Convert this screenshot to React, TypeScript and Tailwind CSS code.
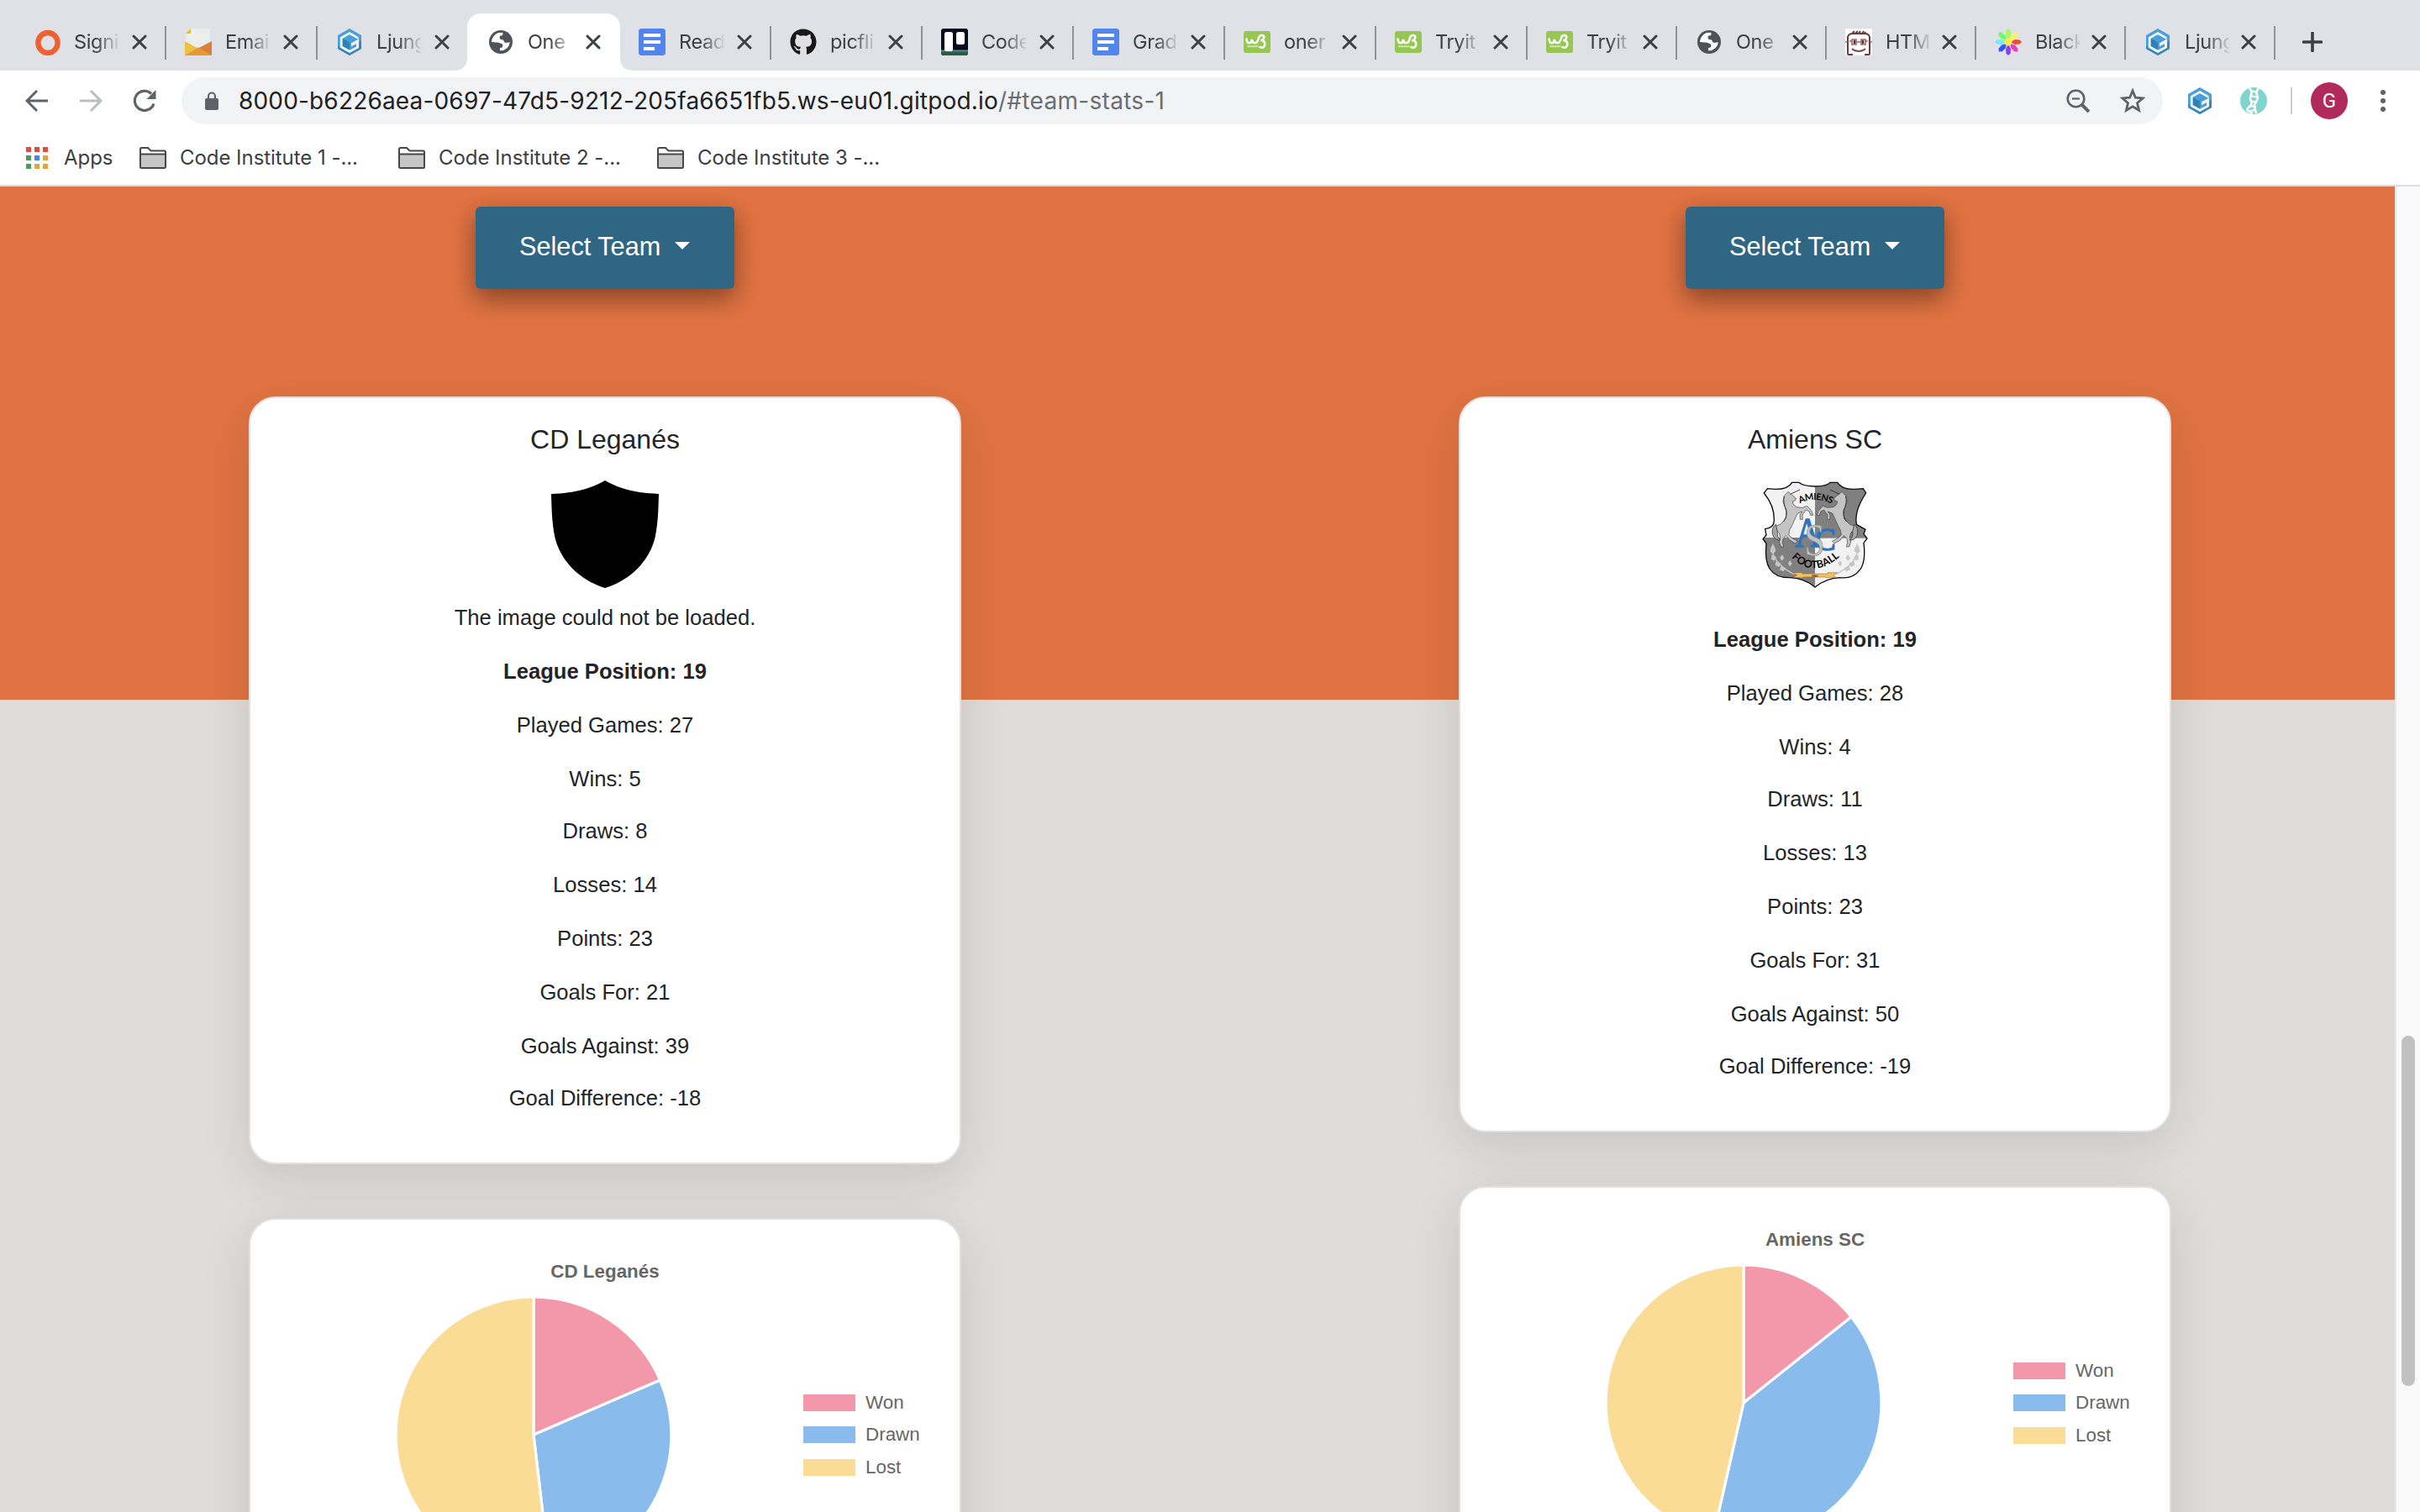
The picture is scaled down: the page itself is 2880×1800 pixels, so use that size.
import type { ReactNode } from "react";
import { FaGithub } from "react-icons/fa";

/* ---------- Favicons ---------- */

function RingIcon() {
  return (
    <svg viewBox="0 0 32 32" className="size-8">
      <ellipse cx="17" cy="17" rx="11.6" ry="12" fill="none" stroke="#ee6130" strokeWidth="6.4" />
    </svg>
  );
}

function MailIcon() {
  return (
    <svg viewBox="0 0 32 32" className="size-8">
      <path d="M7 0H30V22H1V6Z" fill="#eceeee" />
      <path d="M7 0V6H1Z" fill="#f2b91f" />
      <path d="M0 15L16 24L0 32Z" fill="#eac23e" />
      <path d="M32 15L15 24L32 32Z" fill="#d9803a" />
      <path d="M0 32L16 22.500L32 32Z" fill="#e69a35" />
    </svg>
  );
}

function GitpodIcon() {
  return (
    <svg viewBox="0 0 32 32" className="size-8">
      <path d="M16 0L30 8V24L16 32L2 24V8Z" fill="#4b9fd8" />
      <path d="M2 20V24L16 32L30 24V14L16 28Z" fill="#3587bb" />
      <path d="M16 4L26.500 10V13L16 7.200L7.500 12V21L16 25.800L24 21.500V18L18 21.300V17.200L27 12.500V23L16 29L4.800 22.700V10.300Z" fill="#f2f5f8" />
      <path d="M16 7.600L24 12L16 16.500L8 12Z" fill="#45a0dc" />
      <path d="M8 12L16 16.500V25L8 20.700Z" fill="#3180b2" />
    </svg>
  );
}

function GlobeIcon() {
  return (
    <svg viewBox="0 0 32 32" className="size-8">
      <circle cx="16" cy="16" r="14" fill="#50525a" />
      <path
        d="M18.300 4.700Q19 7.500 17.500 8.300L15 8.700Q14 11 15.300 12.700L19 13.500Q20 16.500 21.500 17L26.800 16.200Q26.500 20.500 23.500 23.300Q20 26.500 15 26.300V23Q18.500 23 18.300 20.500Q18.500 18.300 16.800 18L13.500 16.800L5.200 16Q5 12.500 7 9.800Q9.500 6 13 5Z"
        fill="#fff"
      />
      <path d="M5.200 14.800Q8.500 15.500 10.500 13.500T12.500 11.500L12.500 9.500" fill="none" stroke="#fff" strokeWidth="1.500" />
    </svg>
  );
}

function DocsIcon() {
  return (
    <svg viewBox="0 0 32 32" className="size-8">
      <rect width="32" height="32" rx="3.500" fill="#5186ec" />
      <path d="M6 6H26V10H6ZM6 14H26V18H6ZM6 22H19V26H6Z" fill="#fff" />
    </svg>
  );
}

function TrelloIcon() {
  return (
    <svg viewBox="0 0 32 32" className="size-8">
      <rect width="32" height="32" rx="3" fill="#020b1b" />
      <path d="M0 25H32V29Q32 32 29 32H3Q0 32 0 29Z" fill="#2c5a48" />
      <path d="M0 26H32V27.500H0Z" fill="#4c8a80" />
      <rect x="4" y="4" width="10" height="23" rx="2.500" fill="#fff" />
      <rect x="18" y="4" width="10" height="15" rx="2.500" fill="#fff" />
    </svg>
  );
}

function W3Icon() {
  return (
    <svg viewBox="0 0 32 32" className="size-8">
      <rect y="3" width="32" height="26" rx="3" fill="#96c654" />
      <path d="M3.500 12.500Q4 17.300 7 17.300Q9.500 17.300 10 13Q10.500 17.300 13.500 17.300Q16.500 17.300 18 11Q19 7.500 22.500 8Q25.500 9 23.500 12.500Q22.500 14 20.500 14.300Q26.500 14.500 25 20Q23.500 24 19.500 22" fill="none" stroke="#fff" strokeWidth="2.600" strokeLinecap="round" />
      <path d="M4.500 21.200H17.500" stroke="#e3f1cf" strokeWidth="2" strokeDasharray="1.500 .5" />
    </svg>
  );
}

function FaceIcon() {
  return (
    <svg viewBox="0 0 32 32" className="size-8">
      <rect width="32" height="32" fill="#fff" />
      <path d="M9 31H4Q2.500 31 3 28V10Q4 6 9 6H23Q28 6 29 10V28Q29.500 31 28 31H23M8 6L11 3M12 6L15 3M16 6L18 3M20 6L22 3M23 6L24 4" fill="none" stroke="#6a3b38" strokeWidth="2" />
      <path d="M8 13H13V19H8ZM19 13H24V19H19ZM13 16H19M0 16H3M5 15H8M24 15H27M29 16H32" fill="#e2cdcc" stroke="#9b6a67" strokeWidth="1.600" />
      <path d="M11 14V18M21 14V18" stroke="#5b2c2a" strokeWidth="2" />
      <path d="M8 24Q11 27 16 27T24 24" fill="none" stroke="#7d4f4c" strokeWidth="1.800" />
    </svg>
  );
}

const petals = [
  { angle: 0, color: "#a4fb57" },
  { angle: 45, color: "#fff262" },
  { angle: 90, color: "#f04b32" },
  { angle: 135, color: "#ec3fc0" },
  { angle: 180, color: "#8b3df2" },
  { angle: 225, color: "#2f55f2" },
  { angle: 270, color: "#70ecfd" },
  { angle: 315, color: "#72fa66" },
];

function FlowerIcon() {
  return (
    <svg viewBox="0 0 32 32" className="size-8">
      {petals.map((p) => (
        <path key={p.angle} d="M16 0L18.600 2.500L19 8L16.600 12.500H15.400L13 8L13.400 2.500Z" fill={p.color} transform={`rotate(${p.angle} 16 16)`} />
      ))}
      <circle cx="16" cy="16" r="4.500" fill="#fdea48" />
    </svg>
  );
}

function CloseIcon() {
  return (
    <svg viewBox="0 0 18 18" className="size-[18px]">
      <path d="M2 2L16 16M16 2L2 16" stroke="#3c4043" strokeWidth="3" strokeLinecap="round" />
    </svg>
  );
}

/* ---------- Browser chrome ---------- */

type Tab = { label: string; icon: ReactNode; active?: boolean; line?: boolean; narrow?: boolean };

const tabs: Tab[] = [
  { label: "Signi", icon: <RingIcon />, line: true },
  { label: "Emai", icon: <MailIcon />, line: true },
  { label: "Ljung", icon: <GitpodIcon /> },
  { label: "One", icon: <GlobeIcon />, active: true },
  { label: "Read", icon: <DocsIcon />, line: true },
  { label: "picfli", icon: <FaGithub className="size-8 text-[#191717]" />, line: true },
  { label: "Code", icon: <TrelloIcon />, line: true },
  { label: "Grad", icon: <DocsIcon />, line: true },
  { label: "oner", icon: <W3Icon />, line: true },
  { label: "Tryit", icon: <W3Icon />, line: true },
  { label: "Tryit", icon: <W3Icon />, line: true, narrow: true },
  { label: "One", icon: <GlobeIcon />, line: true, narrow: true },
  { label: "HTM", icon: <FaceIcon />, line: true, narrow: true },
  { label: "Black", icon: <FlowerIcon />, line: true, narrow: true },
  { label: "Ljung", icon: <GitpodIcon />, line: true, narrow: true },
];

function TabItem({ tab }: { tab: Tab }) {
  const width = tab.active ? "-ml-0.5 w-[182px] pl-6" : tab.narrow ? "w-[178px] pl-[22px]" : "w-[180px] pl-[22px]";
  return (
    <div className={`relative flex h-[68px] shrink-0 items-center ${width} ${tab.active ? "rounded-t-[16px] bg-white" : ""}`}>
      {tab.active && (
        <>
          <svg viewBox="0 0 16 16" className="absolute bottom-0 -left-4 size-4">
            <path d="M16 0V16H0Q16 16 16 0Z" fill="#fff" />
          </svg>
          <svg viewBox="0 0 16 16" className="absolute -right-4 bottom-0 size-4">
            <path d="M0 0V16H16Q0 16 0 0Z" fill="#fff" />
          </svg>
        </>
      )}
      <span className="shrink-0">{tab.icon}</span>
      <span className="ml-4 w-[53px] overflow-hidden text-[23.5px] leading-8 tracking-[-0.35px] whitespace-nowrap text-[#3c4043] [mask-image:linear-gradient(to_right,#000_50%,transparent_105%)]">
        {tab.label}
      </span>
      <span className={tab.narrow ? "ml-3.5 shrink-0" : "ml-4 shrink-0"}>
        <CloseIcon />
      </span>
      {tab.line && <span className="mt-px ml-auto h-10 w-[2px] bg-[#909297]" />}
    </div>
  );
}

function TabStrip() {
  return (
    <div className="flex h-[84px] shrink-0 items-end bg-[#dfe1e6] pl-[18px]">
      {tabs.map((tab, i) => (
        <TabItem key={i} tab={tab} />
      ))}
      <div className="flex h-[68px] items-center pl-8">
        <svg viewBox="0 0 24 24" className="size-6">
          <path d="M12 1.500V22.500M1.500 12H22.500" stroke="#3c4043" strokeWidth="3.600" strokeLinecap="round" />
        </svg>
      </div>
    </div>
  );
}

function Toolbar() {
  return (
    <div className="flex h-[72px] shrink-0 items-center bg-white pl-[30px]">
      <svg viewBox="0 0 28 28" className="size-7">
        <path d="M27 14H3M14 2L2 14L14 26" fill="none" stroke="#5f6368" strokeWidth="3" />
      </svg>
      <svg viewBox="0 0 28 28" className="ml-9 size-7">
        <path d="M1 14H25M14 2L26 14L14 26" fill="none" stroke="#bbbdc0" strokeWidth="3" />
      </svg>
      <svg viewBox="0 0 28 28" className="ml-9 size-7">
        <path d="M25 17.500A11.600 11.600 0 1 1 22 5.500" fill="none" stroke="#5f6368" strokeWidth="3.200" />
        <path d="M27.500 1V12H16.500Z" fill="#5f6368" />
      </svg>
      <div className="ml-[30px] flex h-14 w-[2358px] items-center rounded-full bg-[#f1f3f5] pl-7">
        <svg viewBox="0 0 16 22" className="h-[22px] w-4">
          <rect y="8" width="16" height="14" rx="2" fill="#5f6368" />
          <path d="M4 9V5.500A4 4 0 0 1 12 5.500V9" fill="none" stroke="#5f6368" strokeWidth="2.200" />
        </svg>
        <div className="ml-6 text-[28px] leading-9 whitespace-nowrap">
          <span className="tracking-[0.17px] text-[#202124]">8000-b6226aea-0697-47d5-9212-205fa6651fb5.ws-eu01.gitpod.io</span>
          <span className="tracking-[0.3px] text-[#6b6e72]">/#team-stats-1</span>
        </div>
        <svg viewBox="0 0 28 28" className="mr-9 ml-auto size-7">
          <circle cx="11.500" cy="11.500" r="9.800" fill="none" stroke="#5f6368" strokeWidth="2.600" />
          <path d="M7 11.500H16" stroke="#5f6368" strokeWidth="2.200" />
          <path d="M18.500 18.500L27 27" stroke="#5f6368" strokeWidth="4" />
        </svg>
        <svg viewBox="0 0 30 30" className="mr-[21px] size-[30px]">
          <path d="M15 3L18.400 11.200L27.200 11.900L20.500 17.700L22.600 26.400L15 21.800L7.400 26.400L9.500 17.700L2.800 11.900L11.600 11.200Z" fill="none" stroke="#5f6368" strokeWidth="2.800" />
        </svg>
      </div>
      <span className="ml-[28px]">
        <GitpodIcon />
      </span>
      <svg viewBox="0 0 32 32" className="ml-8 size-8">
        <circle cx="16" cy="16" r="16" fill="#7fd4cb" />
        <path d="M11 1Q15 5 13 9T13 17T10 24T15 31M22 1Q18 5 20 9T19 17T17 24T19 31" fill="none" stroke="#fff" strokeWidth="2.600" />
        <path d="M12 4L21 6M12 10L22 12M12 16L20 18M10 22L19 23M11 28L19 27" stroke="#fff" strokeWidth="2.200" />
      </svg>
      <span className="ml-7 h-8 w-[2px] bg-[#cdcfd3]" />
      <span className="ml-[22px] flex size-11 items-center justify-center rounded-full bg-[#b02a5b] font-['Roboto'] text-[24px] text-white">G</span>
      <span className="ml-[39px] flex flex-col gap-1">
        <i className="size-1.5 rounded-full bg-[#5f6368]" />
        <i className="size-1.5 rounded-full bg-[#5f6368]" />
        <i className="size-1.5 rounded-full bg-[#5f6368]" />
      </span>
    </div>
  );
}

const appDots = ["bg-[#e24a3f]", "bg-[#e24a3f]", "bg-[#e24a3f]", "bg-[#4f9a5b]", "bg-[#4285f4]", "bg-[#e5a43a]", "bg-[#4f9a5b]", "bg-[#e5a43a]", "bg-[#e5a43a]"];

function BookmarksBar() {
  return (
    <div className="flex h-[66px] shrink-0 items-center border-b-2 border-[#dadce3] bg-white pl-[31px] text-[24px] tracking-[-0.05px] text-[#3c4043]">
      <div className="grid grid-cols-3 gap-1">
        {appDots.map((c, i) => (
          <i key={i} className={`size-1.5 ${c}`} />
        ))}
      </div>
      <span className="ml-[19px] w-[58px]">Apps</span>
      {[1, 2, 3].map((n) => (
        <div key={n} className="ml-8 flex w-[276px] items-center">
          <svg viewBox="0 0 32 26" className="h-[26px] w-8">
            <path d="M1 24V2.500Q1 1 2.500 1H10L13.500 4.500H29.500Q31 4.500 31 6V24Q31 25 29.500 25H2.500Q1 25 1 24Z" fill="#fff" stroke="#464749" strokeWidth="2" />
            <path d="M2 9H30V24H2Z" fill="#c6c6c6" />
            <path d="M1 8.500H31" stroke="#464749" strokeWidth="2" />
          </svg>
          <span className="ml-4 whitespace-nowrap">Code Institute {n} -...</span>
        </div>
      ))}
    </div>
  );
}

/* ---------- Team logos ---------- */

function ShieldLogo() {
  return (
    <svg viewBox="0 0 128 128" className="size-32">
      <path d="M64 0C80 9 98 15 128 16C127.500 36 127 50 124 66C118 94 96 118 64 128C32 118 10 94 4 66C1 50 .5 36 0 16C30 15 48 9 64 0Z" fill="#000" />
    </svg>
  );
}

function Unicorn() {
  return (
    <g>
      <path
        d="M204 133L212 140L232 156L230 164L220 168L222 178L234 188L256 190L272 184L288 202L293 217L284 217L280 204L268 198L262 206L255 216L256 232L247 232L246 216L254 204L238 210L226 236L216 258L210 268L206 288L220 300L238 310L230 318L210 306L196 290L186 302L184 316L188 330L178 330L172 312L176 294L172 280L162 270L158 256L176 250L196 230L198 206L192 186L186 168L190 148Z"
        fill="#c4c4c4"
        stroke="#333"
        strokeWidth="1.800"
      />
      <path d="M160 250Q142 262 150 290Q160 308 176 306Q164 296 166 276Z" fill="#a5a5a5" stroke="#222" strokeWidth="2" />
      <path d="M212 142L246 126" stroke="#222" strokeWidth="2.500" />
      <path d="M190 150Q184 172 198 200Q202 222 188 240" fill="none" stroke="#333" strokeWidth="3" />
    </g>
  );
}

function Laurel() {
  return (
    <g fill="#c6c6c6">
      <path d="M148 345Q158 395 226 428" fill="none" stroke="#c6c6c6" strokeWidth="4" />
      <path d="M150 318L157 334L160 345L150 354L140 348L142 334Z" />
      <path d="M146 358L162 366L154 380L144 374Z" />
      <path d="M183 358L190 370L182 380L174 370Z" />
      <path d="M160 382L178 388L172 402L158 396Z" />
      <path d="M210 378L218 390L210 400L204 390Z" />
      <path d="M178 400L196 406L188 418L174 412Z" />
    </g>
  );
}

const crestOutline =
  "M218 100H242Q258 114 300 114Q342 114 354 100H380Q396 126 442 124L472 122L482 138Q440 200 448 250L480 268L474 284L486 300L474 316Q482 380 462 410Q436 446 388 440Q340 442 300 474Q262 442 212 440Q160 442 138 408Q120 380 126 318L114 302L126 288L122 266Q154 262 154 236Q156 184 118 138L130 122Q200 132 218 100Z";

function AmiensLogo() {
  return (
    <svg viewBox="108 93 384 384" className="size-32">
      <defs>
        <clipPath id="crest">
          <path d={crestOutline} />
        </clipPath>
        <path id="arcTop" d="M246 175Q300 148 364 178" />
        <path id="arcBottom" d="M216 368Q296 448 392 362" />
      </defs>
      <g clipPath="url(#crest)">
        <rect x="108" y="93" width="384" height="384" fill="#f2f2f2" />
        <rect x="300" y="93" width="192" height="206" fill="#808080" />
        <rect x="108" y="297" width="192" height="180" fill="#808080" />
      </g>
      <path d={crestOutline} fill="none" stroke="#0a0a0a" strokeWidth="4" />
      <Laurel />
      <g transform="translate(600 0) scale(-1 1)">
        <Laurel />
        <Unicorn />
      </g>
      <Unicorn />
      <text x="228" y="331" fontFamily="Liberation Serif" fontSize="150" fill="#2d74bd" stroke="#2d74bd" strokeWidth="4" textLength="92" lengthAdjust="spacingAndGlyphs">A</text>
      <text x="300" y="342" fontFamily="Liberation Serif" fontSize="112" fill="#2d74bd" stroke="#2d74bd" strokeWidth="4" textLength="74" lengthAdjust="spacingAndGlyphs">C</text>
      <text x="262" y="359" fontFamily="Liberation Serif" fontSize="164" fill="#c2c2c2" stroke="#8a8a8a" strokeWidth="2" textLength="74" lengthAdjust="spacingAndGlyphs">S</text>
      <text fontFamily="Lato" fontWeight="700" fontSize="33" fill="#080808">
        <textPath href="#arcTop" textLength="118">AMIENS</textPath>
      </text>
      <text fontFamily="Lato" fontWeight="700" fontSize="37" fill="#080808">
        <textPath href="#arcBottom" textLength="194">FOOTBALL</textPath>
      </text>
      <path d="M220 422H254V426H346V422H380L366 431L376 440H340V438H258V440H222L236 431Z" fill="#f5be5f" stroke="#8c6420" strokeWidth="1.500" />
      <text x="287" y="438" fontFamily="Liberation Serif" fontWeight="700" fontSize="12" fill="#222">1901</text>
    </svg>
  );
}

/* ---------- Page content ---------- */

type Team = {
  name: string;
  logo: ReactNode;
  error?: string;
  position: number;
  stats: [string, number][];
  won: number;
  drawn: number;
  lost: number;
};

const teams: Team[] = [
  {
    name: "CD Leganés",
    logo: <ShieldLogo />,
    error: "The image could not be loaded.",
    position: 19,
    stats: [["Played Games", 27], ["Wins", 5], ["Draws", 8], ["Losses", 14], ["Points", 23], ["Goals For", 21], ["Goals Against", 39], ["Goal Difference", -18]],
    won: 5,
    drawn: 8,
    lost: 14,
  },
  {
    name: "Amiens SC",
    logo: <AmiensLogo />,
    position: 19,
    stats: [["Played Games", 28], ["Wins", 4], ["Draws", 11], ["Losses", 13], ["Points", 23], ["Goals For", 31], ["Goals Against", 50], ["Goal Difference", -19]],
    won: 4,
    drawn: 11,
    lost: 13,
  },
];

function Pie({ values }: { values: { value: number; color: string }[] }) {
  const total = values.reduce((sum, v) => sum + v.value, 0);
  const r = 164;
  const point = (a: number) => `${165 + r * Math.sin(a)} ${165 - r * Math.cos(a)}`;
  let angle = 0;
  return (
    <svg viewBox="0 0 330 330" className="size-[330px] shrink-0">
      {values.map((v) => {
        const start = angle;
        angle += (v.value / total) * Math.PI * 2;
        const large = angle - start > Math.PI ? 1 : 0;
        return <path key={v.color} d={`M165 165L${point(start)}A${r} ${r} 0 ${large} 1 ${point(angle)}Z`} fill={v.color} stroke="#fff" strokeWidth="3.200" strokeLinejoin="bevel" />;
      })}
    </svg>
  );
}

function SelectButton() {
  return (
    <button className="flex h-[98px] w-[308px] shrink-0 items-start rounded-[6px] bg-[#2f6683] pt-[29px] pl-[52px] text-[30.7px] leading-[38px] text-white shadow-[0_12.8px_27.2px_rgba(0,0,0,0.22),0_9.6px_32px_rgba(0,0,0,0.22)]">
      <span className="whitespace-nowrap">Select Team</span>
      <span className="mt-[13px] ml-[17px] border-x-[9px] border-t-[9px] border-x-transparent border-t-white" />
    </button>
  );
}

function TeamColumn({ team }: { team: Team }) {
  const legend = [
    { label: "Won", color: "#f398aa", swatch: "bg-[#f398aa]", value: team.won },
    { label: "Drawn", color: "#89bced", swatch: "bg-[#89bced]", value: team.drawn },
    { label: "Lost", color: "#fadc96", swatch: "bg-[#fadc96]", value: team.lost },
  ];
  const card = "flex w-[848px] shrink-0 flex-col items-center rounded-[32px] border-2 border-[#dfe1e1] bg-white shadow-[0_16px_60px_rgba(0,0,0,0.11)]";
  return (
    <div className="flex w-[1440px] flex-col items-center pt-6">
      <SelectButton />
      <section className={`${card} mt-32 pt-[30px] ${team.error ? "h-[914px]" : "h-[876px]"}`}>
        <h5 className="text-[32px] leading-[38px]">{team.name}</h5>
        <div className="mt-[30px]">{team.logo}</div>
        {team.error ? <p className="mt-4 leading-[38px]">{team.error}</p> : <div className="mt-4" />}
        <p className="mt-[26px] leading-[38px] font-bold">League Position: {team.position}</p>
        {team.stats.map(([label, value]) => (
          <p key={label} className={`leading-[38px] ${label === "Draws" || label === "Goal Difference" ? "mt-6" : "mt-[26px]"}`}>
            {label}: {value}
          </p>
        ))}
      </section>
      <section className={`${card} mt-16 h-[560px] pt-12`}>
        <h6 className="text-[22.4px] leading-7 font-bold text-[#666]">{team.name}</h6>
        <div className="mt-[15px] flex w-full items-center pl-[172px]">
          <Pie values={legend} />
          <ul className="ml-[156px] flex flex-col gap-[10.5px] text-[22.4px] leading-7 text-[#666]">
            {legend.map((l) => (
              <li key={l.label} className="flex items-center">
                <span className={`h-5 w-[62px] ${l.swatch}`} />
                <span className="ml-3">{l.label}</span>
              </li>
            ))}
          </ul>
        </div>
      </section>
    </div>
  );
}

export default function App() {
  return (
    <div className="flex h-[1800px] w-[2880px] flex-col overflow-hidden font-['Inter',sans-serif]">
      <TabStrip />
      <Toolbar />
      <BookmarksBar />
      <main className="relative flex h-[1578px] shrink-0 overflow-hidden bg-[linear-gradient(#e07342_0_611px,#e0dcd9_611px)] font-['Liberation_Sans',sans-serif] text-[25.6px] text-[#212529]">
        {teams.map((team) => (
          <TeamColumn key={team.name} team={team} />
        ))}
        <div className="absolute top-0 right-0 h-full w-[30px] border-l-2 border-[#e8e8e8] bg-[#fafafa]">
          <div className="mt-[1011px] ml-[6px] h-[417px] w-4 rounded-full bg-[#c1c1c1]" />
        </div>
      </main>
    </div>
  );
}
